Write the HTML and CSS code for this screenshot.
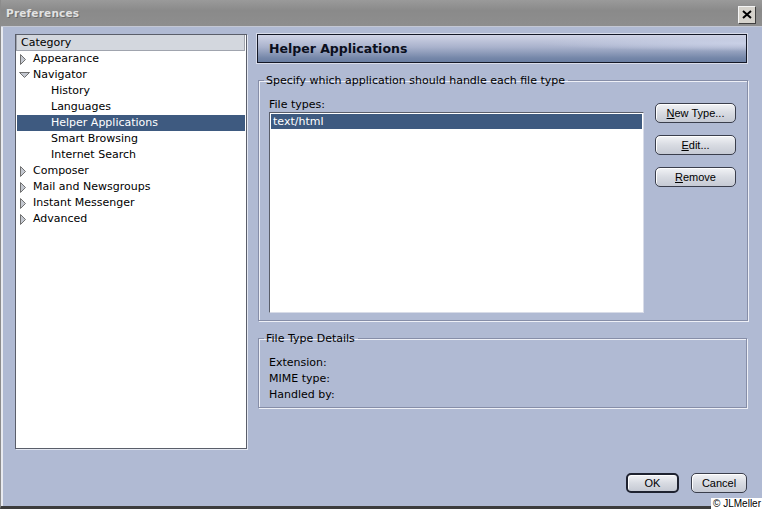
FILE: index.html
```html
<!DOCTYPE html>
<html lang="en">
<head>
    <meta charset="UTF-8">
    <title>Preferences</title>
    <link rel="stylesheet" href="styles.css">
</head>
<body>
    <div class="window">
        <div class="titlebar">
            <span class="title">Preferences</span>
            <span class="close-btn">
                <svg width="10" height="9" viewBox="0 0 10 9"><path d="M1 1 L9 8 M9 1 L1 8" stroke="#000" stroke-width="2"/></svg>
            </span>
        </div>

        <div class="main">
            <div class="tree">
                <div class="tree-header">Category</div>
                <div class="tree-row"><svg class="twisty" width="11" height="11" viewBox="0 0 11 11"><path d="M1.5 0.5 L6.5 5.5 L1.5 10.5 Z" fill="#c4c8d0" stroke="#707070"/></svg>Appearance</div>
                <div class="tree-row"><svg class="twisty" width="11" height="11" viewBox="0 0 11 11"><path d="M0.5 2.5 L10.5 2.5 L5.5 7.5 Z" fill="#c4c8d0" stroke="#707070"/></svg>Navigator</div>
                <div class="tree-row child">History</div>
                <div class="tree-row child">Languages</div>
                <div class="tree-row child selected">Helper Applications</div>
                <div class="tree-row child">Smart Browsing</div>
                <div class="tree-row child">Internet Search</div>
                <div class="tree-row"><svg class="twisty" width="11" height="11" viewBox="0 0 11 11"><path d="M1.5 0.5 L6.5 5.5 L1.5 10.5 Z" fill="#c4c8d0" stroke="#707070"/></svg>Composer</div>
                <div class="tree-row"><svg class="twisty" width="11" height="11" viewBox="0 0 11 11"><path d="M1.5 0.5 L6.5 5.5 L1.5 10.5 Z" fill="#c4c8d0" stroke="#707070"/></svg>Mail and Newsgroups</div>
                <div class="tree-row"><svg class="twisty" width="11" height="11" viewBox="0 0 11 11"><path d="M1.5 0.5 L6.5 5.5 L1.5 10.5 Z" fill="#c4c8d0" stroke="#707070"/></svg>Instant Messenger</div>
                <div class="tree-row"><svg class="twisty" width="11" height="11" viewBox="0 0 11 11"><path d="M1.5 0.5 L6.5 5.5 L1.5 10.5 Z" fill="#c4c8d0" stroke="#707070"/></svg>Advanced</div>
            </div>

            <div class="panel">
                <div class="panel-header">Helper Applications</div>

                <fieldset class="group">
                    <legend>Specify which application should handle each file type</legend>
                    <div class="types">
                        <div class="types-left">
                            <div class="label">File types:</div>
                            <div class="listbox">
                                <div class="list-item selected">text/html</div>
                            </div>
                        </div>
                        <div class="side-buttons">
                            <button class="btn"><u>N</u>ew Type...</button>
                            <button class="btn"><u>E</u>dit...</button>
                            <button class="btn"><u>R</u>emove</button>
                        </div>
                    </div>
                </fieldset>

                <fieldset class="group details">
                    <legend>File Type Details</legend>
                    <div class="detail-line">Extension:</div>
                    <div class="detail-line">MIME type:</div>
                    <div class="detail-line">Handled by:</div>
                </fieldset>
            </div>
        </div>

        <div class="footer">
            <button class="btn btn-default">OK</button>
            <button class="btn btn-cancel">Cancel</button>
        </div>
        <span class="copyright">&copy; JLMeller</span>
    </div>
</body>
</html>
```

FILE: styles.css
```css
/* Classic Netscape-style preferences dialog */
body {
    margin: 0;
    padding: 0;
    background-color: #b0bad3;
    font-family: "DejaVu Sans", sans-serif;
    font-size: 11px;
    color: #000000;
    overflow: hidden;
}

.window {
    position: relative;
    width: 762px;
    height: 509px;
    box-sizing: border-box;
    display: flex;
    flex-direction: column;
    border-left: 1px solid #8c8c8c;
    box-shadow: inset 2px 0 0 #e8eaf0;
    border-bottom: 3px solid #3c3c3c;
}

.titlebar {
    height: 26px;
    border-bottom: 1px solid #c4c8d4;
    background: linear-gradient(#9a9a9a, #8a8a8a 40%, #8e8e8e);
    display: flex;
    align-items: center;
    justify-content: space-between;
    padding: 0 6px 0 5px;
}

.title {
    font-family: "DejaVu Sans", sans-serif;
    font-weight: bold;
    font-size: 10.5px;
    color: #e2e2e2;
    text-shadow: 1px 1px 0 #6a6a6a;
    letter-spacing: 0.2px;
}

.close-btn {
    width: 16px;
    height: 16px;
    background-color: #d6d3cc;
    border: 1px solid;
    border-color: #f4f4f4 #404040 #404040 #f4f4f4;
    display: flex;
    align-items: center;
    justify-content: center;
    margin-top: 3px;
}

.main {
    display: flex;
    padding: 7px 15px 0 14px;
}

/* Category tree */
.tree {
    width: 231px;
    height: 413px;
    background-color: #ffffff;
    border: 1px solid #5a5e6a;
    box-shadow: 1px 1px 0 #e4e8f2;
}

.tree-header {
    height: 15px;
    line-height: 15px;
    background-color: #d3d7de;
    border: 1px solid #a0a4ae;
    border-top: none;
    margin-right: 1px;
    padding-left: 4px;
}

.tree-row {
    height: 16px;
    line-height: 16px;
    padding-left: 3px;
    display: flex;
    align-items: center;
    white-space: nowrap;
}

.twisty {
    margin-right: 3px;
    flex: none;
}

.tree-row.child {
    padding-left: 35px;
}

.tree-row.selected {
    background-color: #3e5a80;
    color: #ffffff;
    margin: 0 1px;
    padding-left: 34px;
}

/* Right panel */
.panel {
    width: 490px;
    margin-left: 10px;
}

.panel-header {
    height: 27px;
    line-height: 27px;
    border: 1px solid #141826;
    box-shadow: 0 0 0 1px #d8dcea;
    background: radial-gradient(ellipse at 100% 30%, #c9d0e6 0%, rgba(201, 208, 230, 0) 30%),
                linear-gradient(#d0d4e6, #a9b2cc 45%, #7587a9 85%, #6a7ea2);
    padding-left: 11px;
    font-family: "DejaVu Sans", sans-serif;
    font-weight: bold;
    font-size: 12.5px;
    color: #0a0e1c;
}

.group {
    margin: 11px 0 0 1px;
    padding: 11px 11px 7px 10px;
    border: 1px solid #868ea8;
    box-shadow: 1px 1px 0 #eef0f7, inset 1px 1px 0 #eef0f7;
}

.group legend {
    padding: 0 3px 0 2px;
    margin-left: -5px;
    line-height: 13px;
}

.types {
    display: flex;
}

.types-left {
    width: 375px;
}

.label {
    line-height: 13px;
    margin-bottom: 1px;
}

.listbox {
    height: 198px;
    background-color: #ffffff;
    border: 1px solid #5a5e6a;
    border-right-color: #d8dce8;
    border-bottom-color: #d8dce8;
    padding-top: 1px;
}

.list-item {
    height: 15px;
    line-height: 15px;
    padding-left: 2px;
    margin: 0 1px;
}

.list-item.selected {
    background-color: #3e5a80;
    color: #ffffff;
}

.side-buttons {
    display: flex;
    flex-direction: column;
    gap: 12px;
    margin: 5px 0 0 11px;
}

.btn {
    width: 81px;
    height: 20px;
    padding: 0;
    border: 1px solid #3a3e4c;
    border-radius: 5px;
    background: linear-gradient(#f2f3f6, #d8dbe2 50%, #c6cad4);
    box-shadow: inset 1px 1px 0 #ffffff;
    font-family: "Liberation Sans", Arial, sans-serif;
    font-size: 11px;
    color: #000000;
}

.group.details {
    margin-top: 11px;
    padding: 10px 10px 4px 10px;
}

.detail-line {
    height: 16px;
    line-height: 16px;
}

/* Bottom buttons */
.footer {
    display: flex;
    justify-content: flex-end;
    gap: 12px;
    padding: 24px 15px 0 0;
}

.footer .btn {
    width: 56px;
}

.footer .btn-default {
    width: 53px;
    border: 2px solid #1e2230;
}

.copyright {
    position: absolute;
    right: 0;
    bottom: -3px;
    padding: 0 1px 0 2px;
    background-color: #ffffff;
    font-family: "Liberation Sans", Arial, sans-serif;
    font-size: 10px;
    line-height: 11px;
    color: #000000;
}
```
